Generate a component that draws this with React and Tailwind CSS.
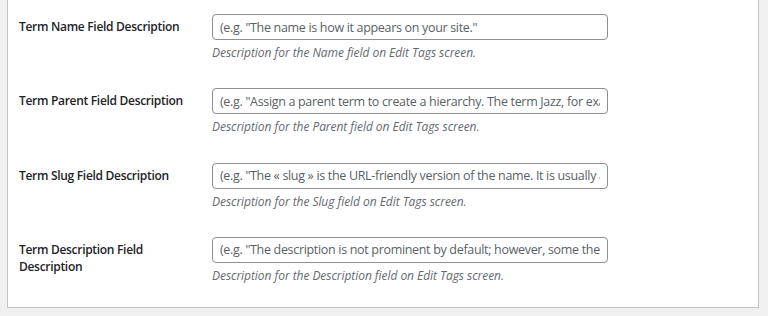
import React from "react";

const rows = [
  {
    label: "Term Name Field Description",
    value: '(e.g. "The name is how it appears on your site."',
    desc: "Description for the Name field on Edit Tags screen.",
  },
  {
    label: "Term Parent Field Description",
    value:
      '(e.g. "Assign a parent term to create a hierarchy. The term Jazz, for example, would be the parent of Bebop and Big Band."',
    desc: "Description for the Parent field on Edit Tags screen.",
  },
  {
    label: "Term Slug Field Description",
    value:
      '(e.g. "The \u00AB slug \u00BB is the URL-friendly version of the name. It is usually all lowercase and contains only letters, numbers, and hyphens."',
    desc: "Description for the Slug field on Edit Tags screen.",
  },
  {
    label: "Term Description Field Description",
    value:
      '(e.g. "The description is not prominent by default; however, some themes may show it."',
    desc: "Description for the Description field on Edit Tags screen.",
  },
];

export default function App() {
  return (
    <div
      className="w-full h-[316px] bg-[#f0f0f1] pl-[7px] pr-[9px] overflow-hidden"
      style={{ fontFamily: '"Open Sans", "Noto Sans", sans-serif' }}
    >
      <div className="bg-white border-x border-b border-[#c3c4c7] pl-[11px] pb-[10px]">
        {rows.map((r, i) => (
          <div key={i} className="flex h-[74.33px] pt-[14px]">
            <div className="w-[193px] shrink-0 pt-[4px] pr-[10px] text-[12px] leading-[17px] font-semibold tracking-[-0.3px] text-[#1d2327]">
              {r.label}
            </div>
            <div className="flex flex-col">
              <input
                readOnly
                value={r.value}
                className="w-[396px] h-[26px] px-[7px] border border-[#8c8f94] rounded-[4px] bg-white text-[12.5px] tracking-[-0.32px] text-[#5a5f65] outline-none"
                style={{ fontFamily: '"Open Sans", "Noto Sans", sans-serif' }}
              />
              <p className="mt-[4px] text-[12px] leading-[17px] italic tracking-[-0.05px] text-[#646970]">
                {r.desc}
              </p>
            </div>
          </div>
        ))}
      </div>
    </div>
  );
}
